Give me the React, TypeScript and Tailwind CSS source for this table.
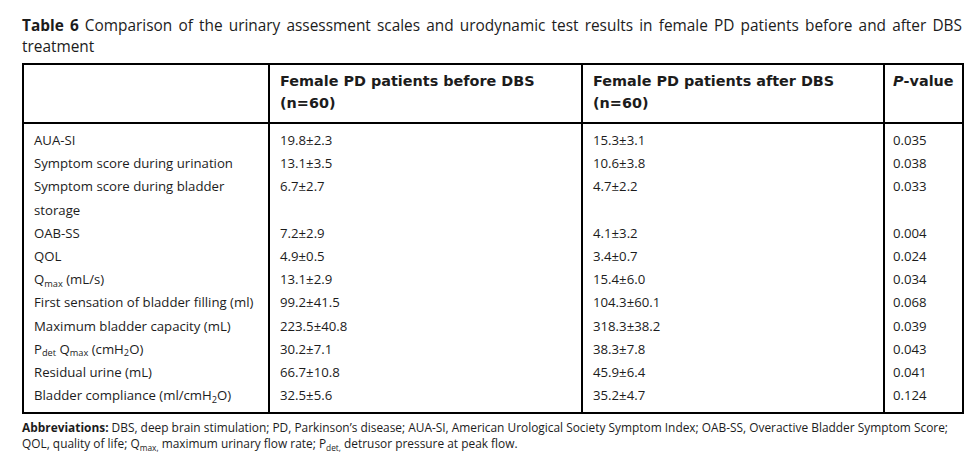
import type { ReactNode } from 'react';

type Row = { label: ReactNode; before: string; after: string; p: string };

const Sub = ({ children }: { children: ReactNode }) => (
  <sub className="text-[0.7em] leading-none">{children}</sub>
);

const rows: Row[] = [
  { label: 'AUA-SI', before: '19.8±2.3', after: '15.3±3.1', p: '0.035' },
  { label: 'Symptom score during urination', before: '13.1±3.5', after: '10.6±3.8', p: '0.038' },
  { label: 'Symptom score during bladder storage', before: '6.7±2.7', after: '4.7±2.2', p: '0.033' },
  { label: 'OAB-SS', before: '7.2±2.9', after: '4.1±3.2', p: '0.004' },
  { label: 'QOL', before: '4.9±0.5', after: '3.4±0.7', p: '0.024' },
  {
    label: (
      <>
        Q<Sub>max</Sub> (mL/s)
      </>
    ),
    before: '13.1±2.9',
    after: '15.4±6.0',
    p: '0.034',
  },
  { label: 'First sensation of bladder filling (ml)', before: '99.2±41.5', after: '104.3±60.1', p: '0.068' },
  { label: 'Maximum bladder capacity (mL)', before: '223.5±40.8', after: '318.3±38.2', p: '0.039' },
  {
    label: (
      <>
        P<Sub>det</Sub> Q<Sub>max</Sub> (cmH<Sub>2</Sub>O)
      </>
    ),
    before: '30.2±7.1',
    after: '38.3±7.8',
    p: '0.043',
  },
  { label: 'Residual urine (mL)', before: '66.7±10.8', after: '45.9±6.4', p: '0.041' },
  {
    label: (
      <>
        Bladder compliance (ml/cmH<Sub>2</Sub>O)
      </>
    ),
    before: '32.5±5.6',
    after: '35.2±4.7',
    p: '0.124',
  },
];

export default function App() {
  return (
    <div className="h-[462px] w-[973px] bg-white px-[22px] pt-[15px] font-['Open_Sans','Lato',sans-serif] text-[#1c1c1c]">
      <p className="w-[940px] text-justify text-[15.4px] leading-[21px]">
        <b>Table 6</b> Comparison of the urinary assessment scales and urodynamic test results in female PD patients
        before and after DBS treatment
      </p>

      <table className="mt-[6px] w-[940px] table-fixed border-collapse border-2 border-black text-[13.2px] leading-[23.2px]">
        <colgroup>
          <col className="w-[246px]" />
          <col className="w-[313px]" />
          <col className="w-[302px]" />
          <col className="w-[79px]" />
        </colgroup>
        <thead>
          <tr className="h-[59px] border-b-2 border-black align-top font-['DejaVu_Sans',sans-serif] text-[14.4px] font-bold leading-[22px]">
            <th className="border-r-2 border-black" />
            <th className="border-r-2 border-black px-[10px] pt-[5px] text-left">
              Female PD patients before DBS
              <br />
              (n=60)
            </th>
            <th className="border-r-2 border-black px-[10px] pt-[5px] text-left">
              Female PD patients after DBS
              <br />
              (n=60)
            </th>
            <th className="px-[8px] pt-[5px] text-left">
              <i>P</i>-value
            </th>
          </tr>
        </thead>
        <tbody>
          {rows.map((r, i) => {
            const pad = i === 0 ? 'pt-[5px]' : i === rows.length - 1 ? 'pb-[5px]' : '';
            return (
              <tr key={i} className="align-top">
                <td className={`border-r-2 border-black pl-[10px] pr-[6px] ${pad}`}>{r.label}</td>
                <td className={`border-r-2 border-black px-[10px] ${pad}`}>{r.before}</td>
                <td className={`border-r-2 border-black px-[10px] ${pad}`}>{r.after}</td>
                <td className={`px-[8px] ${pad}`}>{r.p}</td>
              </tr>
            );
          })}
        </tbody>
      </table>

      <p className="mt-[5px] w-[940px] text-[11.9px] leading-[16px]">
        <b>Abbreviations:</b> DBS, deep brain stimulation; PD, Parkinson’s disease; AUA-SI, American Urological
        Society Symptom Index; OAB-SS, Overactive Bladder Symptom Score;
        <br />
        QOL, quality of life; Q<Sub>max,</Sub> maximum urinary flow rate; P<Sub>det,</Sub> detrusor pressure at peak
        flow.
      </p>
    </div>
  );
}
